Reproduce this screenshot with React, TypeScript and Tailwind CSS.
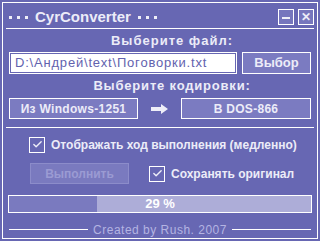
import { Check } from "lucide-react";

// Checkbox square with a tick, drawn like the old skinned app
function Tick() {
  return (
    <div className="w-[16px] h-[16px] border border-white flex items-center justify-center shrink-0">
      <Check size={11} strokeWidth={3} className="text-[#eeeef8]" />
    </div>
  );
}

function Dots() {
  return (
    <div className="flex gap-[5px]">
      <div className="w-[3px] h-[3px] bg-[#eeeef8]" />
      <div className="w-[3px] h-[3px] bg-[#eeeef8]" />
      <div className="w-[3px] h-[3px] bg-[#eeeef8]" />
    </div>
  );
}

export default function App() {
  const progress = 29;

  return (
    <div
      className="w-[320px] h-[241px] bg-[#6767b3] p-[2px] text-[#ececf8]"
      style={{ fontFamily: '"Liberation Sans", Arial, sans-serif' }}
    >
      <div className="h-[237px] border border-white flex flex-col">
        {/* Title bar */}
        <div className="h-[25px] flex items-start pl-[6px] pr-[3px]">
          <div className="mt-[4px] h-[20px] flex items-center gap-[7px] flex-1">
            <Dots />
            <span className="text-[15px] leading-[20px] font-bold">CyrConverter</span>
            <Dots />
          </div>
          <div className="mt-[6px] flex gap-[4px]">
            <div className="w-[16px] h-[16px] border border-white bg-[#7676bd] flex items-center justify-center">
              <div className="w-[8px] h-[2px] bg-[#eeeef8] mt-[2px]" />
            </div>
            <div className="w-[16px] h-[16px] border border-white bg-[#7676bd] flex items-center justify-center text-[12px] font-bold leading-none">
              ✕
            </div>
          </div>
        </div>
        <div className="h-px bg-white mx-[3px]" />

        <div className="px-[6px] flex flex-col">
          <div className="h-[23px] flex items-center justify-center pl-[24px] text-[13px] font-bold tracking-[1px]">
            Выберите файл:
          </div>
          <div className="h-[22px] flex gap-[5px]">
            <div className="w-[228px] border border-white p-px">
              <div className="h-full bg-white text-[#6262ae] text-[13px] leading-[18px] pl-[4px] tracking-[0.8px]">
                D:\Андрей\text\Поговорки.txt
              </div>
            </div>
            <div className="flex-1 border border-white bg-[#7b7bc1] flex items-center justify-center text-[13px] font-bold">
              Выбор
            </div>
          </div>
          <div className="h-[24px] flex items-center justify-center pl-[24px] text-[13px] font-bold tracking-[0.8px]">
            Выберите кодировки:
          </div>
          <div className="h-[21px] flex items-center">
            <div className="w-[129px] h-full border border-white bg-[#7b7bc1] flex items-center justify-center text-[12px] font-bold tracking-[0.3px]">
              Из Windows-1251
            </div>
            <div className="flex-1 flex items-center justify-center">
              <svg width="17" height="10" viewBox="0 0 17 10">
                <path d="M0 3h10V0l7 5-7 5V7H0z" fill="#eeeef8" />
              </svg>
            </div>
            <div className="w-[130px] h-full border border-white bg-[#7b7bc1] flex items-center justify-center text-[12px] font-bold tracking-[0.3px]">
              В DOS-866
            </div>
          </div>
        </div>

        <div className="h-px bg-white mx-[3px] mt-[8px]" />

        <div className="px-[6px] flex flex-col">
          <div className="h-[17px] mt-[8px] flex items-center gap-[6px] pl-[20px] text-[12px] font-bold">
            <Tick />
            <span>Отображать ход выполнения (медленно)</span>
          </div>
          <div className="h-[21px] mt-[10px] flex items-center pl-[21px]">
            <div className="w-[99px] h-full border border-[#8c8cca] bg-[#7a7abf] flex items-center justify-center text-[12px] font-bold text-[#9b9bd3]">
              Выполнить
            </div>
            <div className="ml-[20px] flex items-center gap-[6px] text-[12px] font-bold">
              <Tick />
              <span>Сохранять оригинал</span>
            </div>
          </div>
          <div className="relative h-[18px] mt-[11px] border border-white bg-[#adadd8] -mx-[1px]">
            <div className="h-full bg-[#7a7abf]" style={{ width: `${progress}%` }} />
            <div className="absolute inset-0 flex items-center justify-center text-[13px] font-bold text-white">
              {progress} %
            </div>
          </div>
          <div className="h-[15px] mt-[9px] flex items-center gap-[5px]">
            <div className="flex-1 h-px bg-white" />
            <span className="text-[12px] text-[#b4b4e2] tracking-[0.5px]">Created by Rush. 2007</span>
            <div className="flex-1 h-px bg-white" />
          </div>
        </div>
      </div>
    </div>
  );
}
